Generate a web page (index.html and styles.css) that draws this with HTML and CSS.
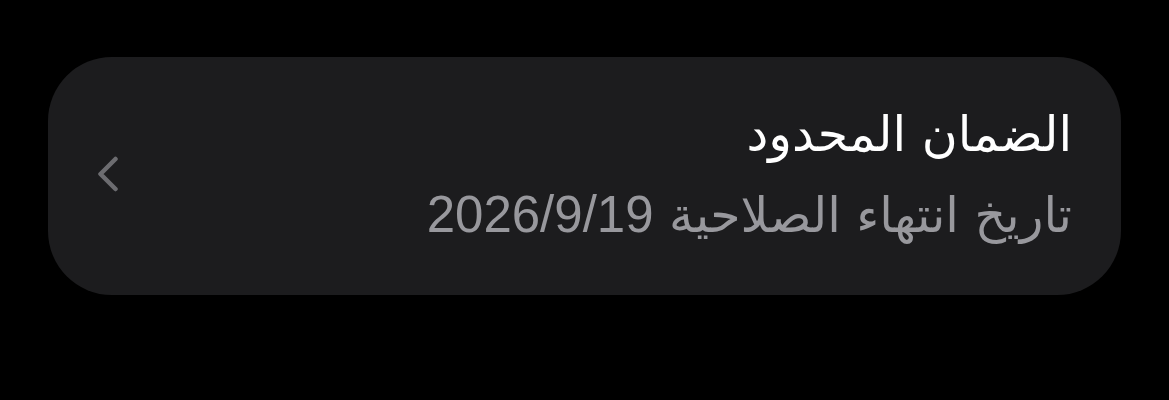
FILE: index.html
```html
<!DOCTYPE html>
<html lang="ar" dir="rtl">
<head>
<meta charset="utf-8">
<link rel="stylesheet" href="styles.css">
</head>
<body>
<div class="page">
  <div class="card">
    <div class="texts">
      <div class="title">الضمان المحدود</div>
      <div class="subtitle">تاريخ انتهاء الصلاحية <span class="num">2026/9/19</span></div>
    </div>
    <svg class="chev" width="22" height="36" viewBox="0 0 22 36">
      <path d="M18.5 3 L3.5 18 L18.5 33" fill="none" stroke="#6c6c70" stroke-width="4.5" stroke-linecap="round" stroke-linejoin="round"/>
    </svg>
  </div>
</div>
</body>
</html>
```
FILE: styles.css
```css
html, body {
  margin: 0;
  padding: 0;
  background: #000;
}
.page {
  width: 1169px;
  height: 400px;
  padding: 57px 48px 0 48px;
  box-sizing: border-box;
}
.card {
  background: #1c1c1e;
  border-radius: 64px;
  height: 238px;
  box-sizing: border-box;
  display: flex;
  align-items: center;
  padding: 0 49px 0 49px;
}
.texts {
  display: flex;
  flex-direction: column;
  gap: 16px;
  margin-top: -2px;
}
.title {
  font-family: "DejaVu Sans", sans-serif;
  font-size: 49px;
  line-height: 64px;
  color: #ffffff;
}
.subtitle {
  font-family: "DejaVu Sans", sans-serif;
  font-size: 49px;
  line-height: 64px;
  color: #98989d;
}
.num {
  font-family: "Liberation Sans", sans-serif;
  font-size: 51px;
}
.chev {
  margin-right: auto;
  margin-top: -4px;
  display: block;
}
```
